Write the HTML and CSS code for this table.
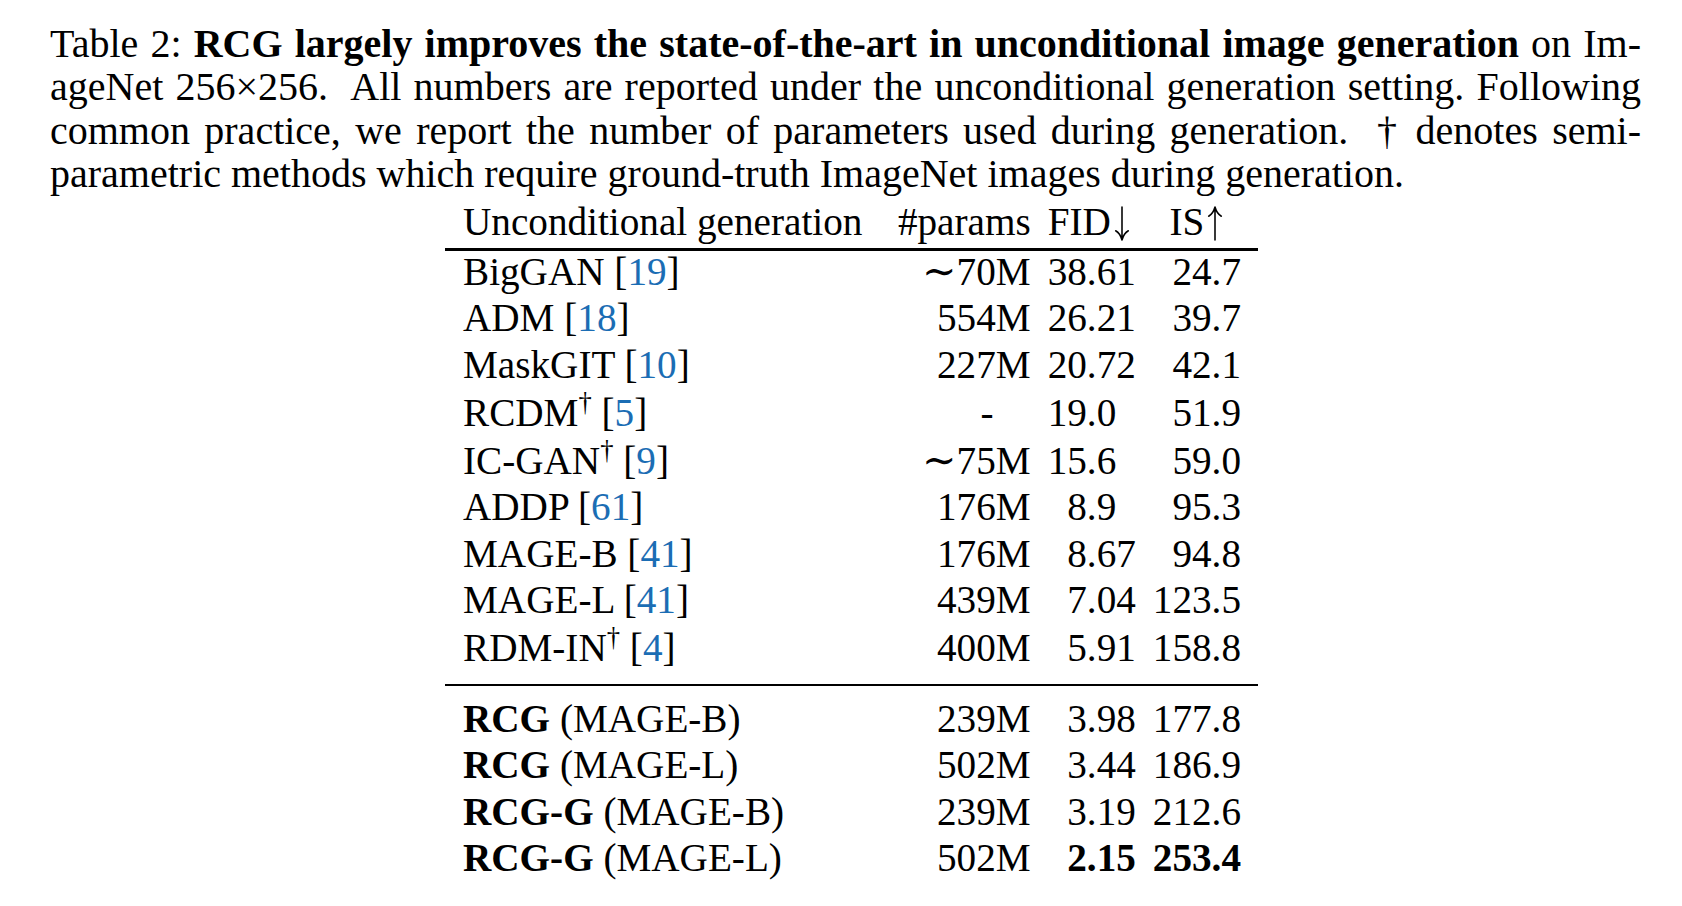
FILE: index.html
```html
<!DOCTYPE html>
<html lang="en">
<head>
<meta charset="utf-8">
<title>Table 2</title>
<link rel="stylesheet" href="styles.css">
</head>
<body>
<div class="page">
  <p class="caption">
    <span class="line">Table 2: <b>RCG largely improves the state-of-the-art in unconditional image generation</b> on Im-</span>
    <span class="line">ageNet 256×256.&nbsp; All numbers are reported under the unconditional generation setting. Following</span>
    <span class="line">common practice, we report the number of parameters used during generation.&nbsp; † denotes semi-</span>
    <span class="line last">parametric methods which require ground-truth ImageNet images during generation.</span>
  </p>

  <div class="table">
    <div class="row head">
      <div class="cell c1">Unconditional generation</div>
      <div class="cell c2">#params</div>
      <div class="cell c3">FID<svg class="arrow" viewBox="0 0 18 36" aria-label="down"><path d="M9 1 V34 M2.5 25.5 Q7 28 9 35 Q11 28 15.5 25.5"/></svg></div>
      <div class="cell c4 center">IS<svg class="arrow" viewBox="0 0 18 36" aria-label="up"><path d="M9 35 V2 M2.5 10.5 Q7 8 9 1 Q11 8 15.5 10.5"/></svg></div>
    </div>
    <div class="rule top"></div>

    <div class="row">
      <div class="cell c1">BigGAN [<span class="cite">19</span>]</div>
      <div class="cell c2"><span class="sim">∼</span>70M</div>
      <div class="cell c3">38.61</div>
      <div class="cell c4">24.7</div>
    </div>
    <div class="row">
      <div class="cell c1">ADM [<span class="cite">18</span>]</div>
      <div class="cell c2">554M</div>
      <div class="cell c3">26.21</div>
      <div class="cell c4">39.7</div>
    </div>
    <div class="row">
      <div class="cell c1">MaskGIT [<span class="cite">10</span>]</div>
      <div class="cell c2">227M</div>
      <div class="cell c3">20.72</div>
      <div class="cell c4">42.1</div>
    </div>
    <div class="row dag">
      <div class="cell c1">RCDM<sup>†</sup> [<span class="cite">5</span>]</div>
      <div class="cell c2"><span class="na">-</span></div>
      <div class="cell c3">19.0</div>
      <div class="cell c4">51.9</div>
    </div>
    <div class="row dag">
      <div class="cell c1">IC-GAN<sup>†</sup> [<span class="cite">9</span>]</div>
      <div class="cell c2"><span class="sim">∼</span>75M</div>
      <div class="cell c3">15.6</div>
      <div class="cell c4">59.0</div>
    </div>
    <div class="row">
      <div class="cell c1">ADDP [<span class="cite">61</span>]</div>
      <div class="cell c2">176M</div>
      <div class="cell c3"><span class="ph">0</span>8.9</div>
      <div class="cell c4">95.3</div>
    </div>
    <div class="row">
      <div class="cell c1">MAGE-B [<span class="cite">41</span>]</div>
      <div class="cell c2">176M</div>
      <div class="cell c3"><span class="ph">0</span>8.67</div>
      <div class="cell c4">94.8</div>
    </div>
    <div class="row">
      <div class="cell c1">MAGE-L [<span class="cite">41</span>]</div>
      <div class="cell c2">439M</div>
      <div class="cell c3"><span class="ph">0</span>7.04</div>
      <div class="cell c4">123.5</div>
    </div>
    <div class="row dag">
      <div class="cell c1">RDM-IN<sup>†</sup> [<span class="cite">4</span>]</div>
      <div class="cell c2">400M</div>
      <div class="cell c3"><span class="ph">0</span>5.91</div>
      <div class="cell c4">158.8</div>
    </div>

    <div class="rule mid"></div>

    <div class="row first-after">
      <div class="cell c1"><b>RCG</b> (MAGE-B)</div>
      <div class="cell c2">239M</div>
      <div class="cell c3"><span class="ph">0</span>3.98</div>
      <div class="cell c4">177.8</div>
    </div>
    <div class="row">
      <div class="cell c1"><b>RCG</b> (MAGE-L)</div>
      <div class="cell c2">502M</div>
      <div class="cell c3"><span class="ph">0</span>3.44</div>
      <div class="cell c4">186.9</div>
    </div>
    <div class="row">
      <div class="cell c1"><b>RCG-G</b> (MAGE-B)</div>
      <div class="cell c2">239M</div>
      <div class="cell c3"><span class="ph">0</span>3.19</div>
      <div class="cell c4">212.6</div>
    </div>
    <div class="row">
      <div class="cell c1"><b>RCG-G</b> (MAGE-L)</div>
      <div class="cell c2">502M</div>
      <div class="cell c3"><b><span class="ph">0</span>2.15</b></div>
      <div class="cell c4"><b>253.4</b></div>
    </div>
  </div>
</div>
</body>
</html>
```

FILE: styles.css
```css
html, body {
  margin: 0;
  padding: 0;
  background: #ffffff;
}

body {
  font-family: "Liberation Serif", "Times New Roman", "DejaVu Serif", serif;
  color: #000000;
}

.page {
  width: 1591px;
  padding: 22px 0 0 50px;
}

.caption {
  margin: 0;
  font-size: 40px;
  line-height: 43.3px;
}

.caption .line {
  display: block;
  text-align: justify;
  text-align-last: justify;
  white-space: nowrap;
}

.caption .line.last {
  text-align-last: left;
}

.caption b {
  font-weight: 700;
}

.table {
  display: grid;
  grid-template-columns: 1fr auto auto auto;
  column-gap: 17px;
  width: 813px;
  margin: 7px 0 0 395px;
  font-size: 39.2px;
}

.row {
  display: contents;
}

.cell {
  line-height: 38px;
  padding-bottom: 8.5px;
  white-space: nowrap;
}

.head .cell {
  line-height: 40px;
  padding-bottom: 6px;
}

.c1 { padding-left: 18px; text-align: left; }
.c2 { text-align: right; }
.c3 { text-align: left; }
.c4 { text-align: right; padding-right: 17px; }
.c4.center { text-align: center; }

.dag .cell {
  padding-top: 1.6px;
}

.first-after .cell {
  padding-top: 13.5px;
}

.rule {
  grid-column: 1 / -1;
  background: #000000;
}

.rule.top {
  height: 3px;
  margin-bottom: 1.5px;
}

.rule.mid {
  height: 2px;
  margin-top: 8.5px;
}

.cite {
  color: #1b6db4;
}

sup {
  font-size: 0.68em;
  line-height: 0;
  vertical-align: 0.55em;
}

.sim {
  font-family: "DejaVu Serif", serif;
  font-size: 1.05em;
  line-height: 0;
}

.na {
  display: inline-block;
  padding-right: 37px;
}

.ph {
  visibility: hidden;
}

.arrow {
  display: inline-block;
  width: 18px;
  height: 35px;
  margin-left: 2px;
  vertical-align: -6px;
}

.arrow path {
  fill: none;
  stroke: #000000;
  stroke-width: 1.6;
  stroke-linecap: round;
  stroke-linejoin: round;
}
```
